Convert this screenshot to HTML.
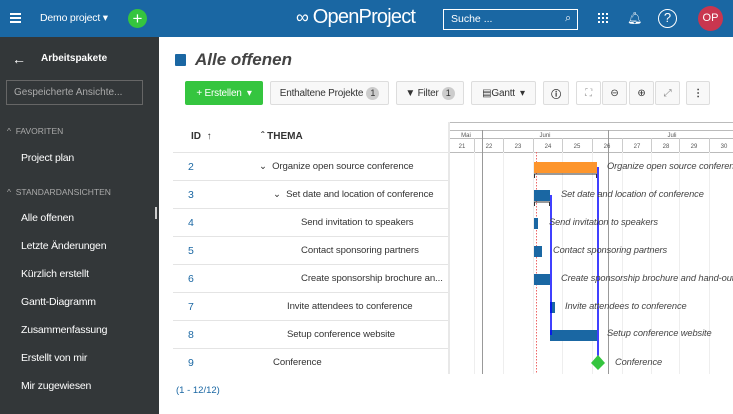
<!DOCTYPE html>
<html><head><meta charset="utf-8"><style>
*{box-sizing:border-box;margin:0;padding:0}
body{width:733px;height:414px;overflow:hidden;font-family:"Liberation Sans",sans-serif;background:#fff;position:relative;font-size:11px;color:#333}
.a{position:absolute}
.top{left:0;top:0;width:733px;height:37px;background:#1a67a3;color:#fff}
.side{left:0;top:37px;width:159px;height:377px;background:#333739;color:#fff}
.btn{position:absolute;top:81px;height:24px;border:1px solid #ddd;background:#f8f8f8;border-radius:2px;font-size:10px;display:flex;align-items:center;justify-content:center;color:#333;letter-spacing:-0.2px}
.badge{display:inline-block;background:#ccc;border-radius:8px;width:13px;height:13px;font-size:9px;text-align:center;line-height:13px;margin-left:3px}
.row{position:absolute;left:173px;width:275px;height:28px;border-bottom:1px solid #e4e4e4}
.id{position:absolute;left:15px;top:8px;color:#1a67a3;font-size:10.5px}
.t{position:absolute;top:8px;font-size:9.6px;white-space:nowrap;letter-spacing:-0.1px}
.lab{position:absolute;font-style:italic;font-size:9.3px;color:#444;white-space:nowrap;letter-spacing:-0.1px}
.sl{position:absolute;left:21px;font-size:10.5px;letter-spacing:-0.2px}
</style></head><body>
<div class="a top">
 <div class="a" style="left:10px;top:13px;width:11px;height:2px;background:#fff;box-shadow:0 4px #fff,0 8px #fff"></div>
 <div class="a" style="left:40px;top:12px;font-size:10.5px;letter-spacing:-0.2px">Demo project ▾</div>
 <div class="a" style="left:128px;top:9px;width:19px;height:19px;border-radius:50%;background:#35c53f;text-align:center;line-height:19px;font-size:17px">+</div>
 <div class="a" style="left:296px;top:6px;font-size:20px;letter-spacing:-0.8px"><span style="font-size:18px">&#x221E;</span> OpenProject</div>
 <div class="a" style="left:443px;top:9px;width:135px;height:21px;border:1px solid #fff;font-size:10.5px;padding:3px 7px">Suche ...<span style="position:absolute;right:6px;top:2px">&#x2315;</span></div>
 <div class="a" style="left:598px;top:13px;width:10px;height:10px;background:repeating-linear-gradient(90deg,#fff 0 2px,transparent 2px 4px);-webkit-mask:repeating-linear-gradient(0deg,#000 0 2px,transparent 2px 4px)"></div>
 <div class="a" style="left:627px;top:11px;font-size:12px">&#x1F514;&#xFE0E;</div>
 <div class="a" style="left:658px;top:9px;width:19px;height:19px;border:1.5px solid #fff;border-radius:50%;text-align:center;line-height:16px;font-size:13px">?</div>
 <div class="a" style="left:698px;top:6px;width:25px;height:25px;border-radius:50%;background:#c9364f;text-align:center;line-height:25px;font-size:11px">OP</div>
</div>
<div class="a side">
 <div class="a" style="left:12px;top:14px;font-size:14px">&#x2190;</div>
 <div class="a" style="left:41px;top:16px;font-size:10px;font-weight:bold">Arbeitspakete</div>
 <div class="a" style="left:6px;top:43px;width:137px;height:25px;border:1px solid #666;color:#aaa;font-size:10px;padding:6px 7px">Gespeicherte Ansichte...</div>
 <div class="a" style="left:7px;top:89px;font-size:8.5px;color:#aaa">^ &nbsp;FAVORITEN</div>
 <div class="sl" style="top:115px">Project plan</div>
 <div class="a" style="left:7px;top:150px;font-size:8.5px;color:#aaa">^ &nbsp;STANDARDANSICHTEN</div>
 <div class="sl" style="top:175px">Alle offenen</div>
 <div class="a" style="left:155px;top:170px;width:2px;height:12px;background:#ccc"></div>
 <div class="sl" style="top:203px">Letzte Änderungen</div>
 <div class="sl" style="top:231px">Kürzlich erstellt</div>
 <div class="sl" style="top:259px">Gantt-Diagramm</div>
 <div class="sl" style="top:287px">Zusammenfassung</div>
 <div class="sl" style="top:315px">Erstellt von mir</div>
 <div class="sl" style="top:343px">Mir zugewiesen</div>
</div>
<div class="a" style="left:175px;top:54px;width:11px;height:12px;background:#1a67a3;border-radius:1px"></div>
<div class="a" style="left:195px;top:50px;font-size:17px;font-style:italic;font-weight:bold;color:#444">Alle offenen</div>
<div class="btn" style="left:185px;width:78px;background:#35c53f;color:#fff;border-color:#35c53f">+ Erstellen &nbsp;▾</div>
<div class="btn" style="left:270px;width:119px">Enthaltene Projekte<span class="badge">1</span></div>
<div class="btn" style="left:396px;width:68px">▼ Filter<span class="badge">1</span></div>
<div class="btn" style="left:471px;width:65px">&#x25A4;Gantt &nbsp;▾</div>
<div class="btn" style="left:543px;width:26px;font-weight:bold">&#x24D8;</div>
<div class="btn" style="left:576px;width:25px;background:#fff;color:#999">⛶</div>
<div class="btn" style="left:602px;width:25px">&#x2296;</div>
<div class="btn" style="left:629px;width:25px">&#x2295;</div>
<div class="btn" style="left:655px;width:25px;color:#888">⤢</div>
<div class="btn" style="left:686px;width:24px;font-weight:bold">⋮</div>

<div class="a" style="left:191px;top:131px;font-size:10px;font-weight:bold">ID &nbsp;<span style="font-weight:normal">&#x2191;</span></div>
<div class="a" style="left:261px;top:131px;font-size:10px;font-weight:bold">&#x2C6; THEMA</div>
<div class="a" style="left:173px;top:152px;width:275px;height:1px;background:#e4e4e4"></div>
<div class="row" style="top:153px"><span class="id">2</span><span class="t" style="left:86px">&#x2304;&nbsp; Organize open source conference</span></div>
<div class="row" style="top:181px"><span class="id">3</span><span class="t" style="left:100px">&#x2304;&nbsp; Set date and location of conference</span></div>
<div class="row" style="top:209px"><span class="id">4</span><span class="t" style="left:128px">Send invitation to speakers</span></div>
<div class="row" style="top:237px"><span class="id">5</span><span class="t" style="left:128px">Contact sponsoring partners</span></div>
<div class="row" style="top:265px"><span class="id">6</span><span class="t" style="left:128px">Create sponsorship brochure an...</span></div>
<div class="row" style="top:293px"><span class="id">7</span><span class="t" style="left:114px">Invite attendees to conference</span></div>
<div class="row" style="top:321px"><span class="id">8</span><span class="t" style="left:114px">Setup conference website</span></div>
<div class="row" style="top:349px;border:none"><span class="id">9</span><span class="t" style="left:100px">Conference</span></div>
<div class="a" style="left:176px;top:385px;font-size:9.5px;color:#1a67a3">(1 - 12/12)</div>

<div class="a" style="left:448px;top:122px;width:2px;height:252px;background:#e8e8e8"></div>
<svg class="a" style="left:450px;top:122px" width="283" height="252">
<g stroke="#bbb" stroke-width="1">
<line x1="0" y1="0.5" x2="283" y2="0.5"/><line x1="0" y1="8.5" x2="283" y2="8.5"/><line x1="0" y1="16.5" x2="283" y2="16.5"/><line x1="0" y1="30.5" x2="283" y2="30.5"/>
</g>
<g stroke="#eee"><line x1="24.5" y1="30" x2="24.5" y2="252"/><line x1="53.5" y1="30" x2="53.5" y2="252"/><line x1="83.5" y1="30" x2="83.5" y2="252"/><line x1="112.5" y1="30" x2="112.5" y2="252"/><line x1="142.5" y1="30" x2="142.5" y2="252"/><line x1="172.5" y1="30" x2="172.5" y2="252"/><line x1="201.5" y1="30" x2="201.5" y2="252"/><line x1="229.5" y1="30" x2="229.5" y2="252"/><line x1="259.5" y1="30" x2="259.5" y2="252"/></g>
<g stroke="#ccc"><line x1="24.5" y1="16" x2="24.5" y2="30"/><line x1="53.5" y1="16" x2="53.5" y2="30"/><line x1="83.5" y1="16" x2="83.5" y2="30"/><line x1="112.5" y1="16" x2="112.5" y2="30"/><line x1="142.5" y1="16" x2="142.5" y2="30"/><line x1="172.5" y1="16" x2="172.5" y2="30"/><line x1="201.5" y1="16" x2="201.5" y2="30"/><line x1="229.5" y1="16" x2="229.5" y2="30"/><line x1="259.5" y1="16" x2="259.5" y2="30"/></g>
<g stroke="#999"><line x1="32.5" y1="8" x2="32.5" y2="252"/><line x1="158.5" y1="8" x2="158.5" y2="252"/></g>
<g font-size="6" fill="#555" font-family="Liberation Sans" text-anchor="middle">
<text x="16" y="15">Mai</text><text x="95" y="15">Juni</text><text x="222" y="15">Juli</text>
<text x="12" y="26">21</text><text x="39" y="26">22</text><text x="68" y="26">23</text><text x="98" y="26">24</text><text x="127" y="26">25</text><text x="157" y="26">26</text><text x="187" y="26">27</text><text x="216" y="26">28</text><text x="244" y="26">29</text><text x="274" y="26">30</text>
</g>
<line x1="86.5" y1="30" x2="86.5" y2="252" stroke="#e66" stroke-dasharray="1.5,1.5"/>
<rect x="84" y="40" width="63" height="11" fill="#fd952c"/>
<path d="M84.5 56v-4h62v4" fill="none" stroke="#333"/>
<rect x="84" y="68" width="16" height="11" fill="#1a67a3"/>
<path d="M84.5 84v-4h15v4" fill="none" stroke="#333"/>
<rect x="84" y="96" width="4" height="11" fill="#1a67a3"/>
<rect x="84" y="124" width="8" height="11" fill="#1a67a3"/>
<rect x="84" y="152" width="16" height="11" fill="#1a67a3"/>
<rect x="100" y="180" width="5" height="11" fill="#1a67a3"/>
<rect x="100" y="208" width="47" height="11" fill="#1a67a3"/>
<line x1="148" y1="45" x2="148" y2="240" stroke="#00f" stroke-width="1.5"/>
<line x1="101" y1="73" x2="101" y2="213" stroke="#00f" stroke-width="1.5"/>
<polygon points="148,233 155,241 148,248 141,241" fill="#35c53f"/>
</svg>
<div class="lab" style="left:607px;top:161px">Organize open source conference</div>
<div class="lab" style="left:561px;top:189px">Set date and location of conference</div>
<div class="lab" style="left:549px;top:217px">Send invitation to speakers</div>
<div class="lab" style="left:553px;top:245px">Contact sponsoring partners</div>
<div class="lab" style="left:561px;top:273px">Create sponsorship brochure and hand-outs</div>
<div class="lab" style="left:565px;top:301px">Invite attendees to conference</div>
<div class="lab" style="left:607px;top:328px">Setup conference website</div>
<div class="lab" style="left:615px;top:357px">Conference</div>
</body></html>
